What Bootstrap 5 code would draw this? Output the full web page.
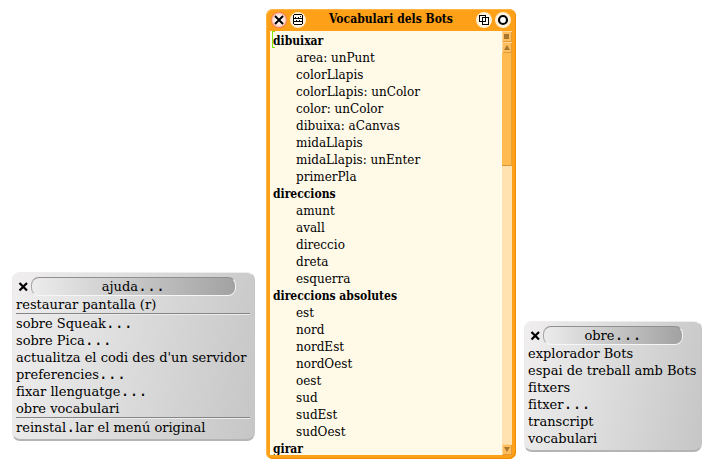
<!DOCTYPE html>
<html lang="ca">
<head>
<meta charset="utf-8">
<meta name="viewport" content="width=device-width, initial-scale=1">
<title>Vocabulari dels Bots</title>
<link rel="stylesheet" href="https://cdn.jsdelivr.net/npm/bootstrap@5.3.0/dist/css/bootstrap.min.css">
<style>
body { background: #fff; color: #000; font-family: "DejaVu Serif", serif; font-size: 13px; line-height: 17px; }
button { color: #000; font: inherit; }
.desktop { min-height: 100vh; }

/* floating menus */
.popmenu { padding: 4px 5px 3px 3px; border-radius: 8px; background: linear-gradient(100deg, #f0eeef 0%, #e0e0e0 38%, #c6c6c6 100%); border: 1px solid; border-color: #f0ecee #c6c6c6 #b4b4b4 #ebe9ea; border-bottom-width: 2px; }
.menu-ajuda { left: 12px; top: 272px; width: 243px; }
.menu-obre { left: 524px; top: 321px; width: 178px; }
.menu-head { height: 19px; padding-right: 13px; gap: 2px; }
.menu-close { width: 13px; height: 13px; }
.menu-title { height: 19px; border-radius: 8px; border: 1px solid; border-color: #8f8f8f #f2f2f2 #f6f6f6 #a8a8a8; background: linear-gradient(90deg, #ececec, #a2a2a2); }
.menu-item { height: 17px; }
.menu-item:hover { background: #d0d0d0; }
.menu-rule { height: 2px; border-top: 1px solid #868686; border-bottom: 1px solid #ececec; margin-right: -1px; }
.dots { font-family: "DejaVu Sans Mono", monospace; font-size: 15px; line-height: 1; }

/* vocabulary window */
.bots { left: 266px; top: 9px; width: 250px; height: 450px; padding: 0 4px 4px; border-radius: 7px; background: #ffa019; box-shadow: inset 1px 1px #ffb545, inset -1px -1px #f08c00; }
.bots-bar { height: 22px; gap: 3px; padding: 0 1px; }
.bots-bar h1 { font: bold 12px/17px "DejaVu Serif Condensed", "DejaVu Serif", serif; word-spacing: normal; }
.ball { width: 16px; height: 16px; border-radius: 8px; background: radial-gradient(circle, #fff 25%, #ffedd2 65%, #ffd695); }
.ball-red { background: radial-gradient(circle, #fff 20%, #ffd8c8 55%, #f0643c 72%); }
.pane { background: #fff9e8; min-height: 0; }
.vocab { font: 12px/17px "DejaVu Serif Condensed", "DejaVu Serif", serif; padding: 2px 3px 0; }
.vocab li li { padding-left: 23px; font-family: "DejaVu Serif", serif; }
.caret { left: 2px; top: 0; width: 3px; height: 17px; border: 1px solid #80e800; border-right: 0; }
.scroller { width: 10px; background: #ffe2b0; }
.scroller button { width: 10px; height: 11px; background: #ffbd5c; box-shadow: inset 1px 1px #ffd595, inset -1px -1px #e09a3a; }
.thumb { height: 113px; background: #ffbb50; border-right: 1px solid #e8a23c; border-bottom: 1px solid #d8983a; }
</style>
</head>
<body>
<main class="desktop position-relative overflow-hidden">

  <section class="popmenu menu-ajuda position-absolute" aria-label="ajuda">
    <header class="menu-head d-flex align-items-center">
      <button class="menu-close btn p-0 border-0 d-flex" aria-label="Tanca"><svg width="13" height="13" viewBox="0 0 13 13"><path d="M3.500 3l7.500 7.500M11 3l-7.500 7.500" stroke="#000" stroke-width="2.200" fill="none"/></svg></button>
      <div class="menu-title flex-grow-1 text-center">ajuda<span class="dots">...</span></div>
    </header>
    <button class="menu-item d-block w-100 text-start text-nowrap border-0 p-0 bg-transparent">restaurar pantalla (r)</button>
    <div class="menu-rule"></div>
    <button class="menu-item d-block w-100 text-start text-nowrap border-0 p-0 bg-transparent">sobre Squeak<span class="dots">...</span></button>
    <button class="menu-item d-block w-100 text-start text-nowrap border-0 p-0 bg-transparent">sobre Pica<span class="dots">...</span></button>
    <button class="menu-item d-block w-100 text-start text-nowrap border-0 p-0 bg-transparent">actualitza el codi des d'un servidor</button>
    <button class="menu-item d-block w-100 text-start text-nowrap border-0 p-0 bg-transparent">preferencies<span class="dots">...</span></button>
    <button class="menu-item d-block w-100 text-start text-nowrap border-0 p-0 bg-transparent">fixar llenguatge<span class="dots">...</span></button>
    <button class="menu-item d-block w-100 text-start text-nowrap border-0 p-0 bg-transparent">obre vocabulari</button>
    <div class="menu-rule"></div>
    <button class="menu-item d-block w-100 text-start text-nowrap border-0 p-0 bg-transparent">reinstal<span class="dots">.</span>lar el menú original</button>
  </section>

  <section class="bots position-absolute d-flex flex-column" aria-labelledby="bots-title">
    <header class="bots-bar d-flex align-items-center">
      <button class="ball ball-red btn p-0 border-0 d-flex" aria-label="Tanca"><svg width="16" height="16" viewBox="0 0 16 16"><path d="M4 4l8 8M12 4l-8 8" stroke="#000" stroke-width="2" fill="none"/></svg></button>
      <button class="ball btn p-0 border-0 d-flex" aria-label="Menú"><svg width="16" height="16" viewBox="0 0 16 16" shape-rendering="crispEdges"><path d="M4 2h8v1h1v9h-1v1h-8v-1h-1v-9h1zM4 3v3h8v-3zM4 7v2h8v-2zM4 10v2h8v-2z" fill-rule="evenodd"/><path d="M5 5h1v1h-1zM8 5h1v1h-1zM10 4h1v1h-1zM6 8h1v1h-1zM9 8h1v1h-1z"/></svg></button>
      <h1 id="bots-title" class="text-center flex-grow-1 mb-0">Vocabulari dels Bots</h1>
      <button class="ball btn p-0 border-0 d-flex" aria-label="Redueix"><svg width="16" height="16" viewBox="0 0 16 16" shape-rendering="crispEdges"><path d="M3.500 3.500h6v6h-6zM6.500 5.500h6v7h-6z" stroke="#000" fill="none"/></svg></button>
      <button class="ball btn p-0 border-0 d-flex" aria-label="Plega"><svg width="16" height="16" viewBox="0 0 16 16"><circle cx="8" cy="8" r="4" stroke="#000" stroke-width="2.200" fill="none"/></svg></button>
    </header>
    <div class="pane d-flex flex-grow-1">
      <div class="flex-grow-1 overflow-hidden position-relative">
        <span class="caret position-absolute"></span>
        <ul class="vocab list-unstyled mb-0">
          <li><strong>dibuixar</strong>
            <ul class="list-unstyled"><li>area: unPunt</li><li>colorLlapis</li><li>colorLlapis: unColor</li><li>color: unColor</li><li>dibuixa: aCanvas</li><li>midaLlapis</li><li>midaLlapis: unEnter</li><li>primerPla</li></ul></li>
          <li><strong>direccions</strong>
            <ul class="list-unstyled"><li>amunt</li><li>avall</li><li>direccio</li><li>dreta</li><li>esquerra</li></ul></li>
          <li><strong>direccions absolutes</strong>
            <ul class="list-unstyled"><li>est</li><li>nord</li><li>nordEst</li><li>nordOest</li><li>oest</li><li>sud</li><li>sudEst</li><li>sudOest</li></ul></li>
          <li><strong>girar</strong></li>
        </ul>
      </div>
      <div class="scroller d-flex flex-column">
        <button class="btn p-0 border-0 rounded-0 d-flex" aria-label="Menú de desplaçament"><svg width="10" height="11" viewBox="0 0 10 11"><path d="M2 3h5v5h-5z" fill="#a87830"/></svg></button>
        <button class="btn p-0 border-0 rounded-0 d-flex" aria-label="Amunt"><svg width="10" height="11" viewBox="0 0 10 11"><path d="M5 3l3 5h-6z" fill="#a87830"/></svg></button>
        <div class="thumb"></div>
        <button class="btn p-0 border-0 rounded-0 d-flex mt-auto" aria-label="Avall"><svg width="10" height="11" viewBox="0 0 10 11"><path d="M2 3h6l-3 5z" fill="#a87830"/></svg></button>
      </div>
    </div>
  </section>

  <section class="popmenu menu-obre position-absolute" aria-label="obre">
    <header class="menu-head d-flex align-items-center">
      <button class="menu-close btn p-0 border-0 d-flex" aria-label="Tanca"><svg width="13" height="13" viewBox="0 0 13 13"><path d="M3.500 3l7.500 7.500M11 3l-7.500 7.500" stroke="#000" stroke-width="2.200" fill="none"/></svg></button>
      <div class="menu-title flex-grow-1 text-center">obre<span class="dots">...</span></div>
    </header>
    <button class="menu-item d-block w-100 text-start text-nowrap border-0 p-0 bg-transparent">explorador Bots</button>
    <button class="menu-item d-block w-100 text-start text-nowrap border-0 p-0 bg-transparent">espai de treball amb Bots</button>
    <button class="menu-item d-block w-100 text-start text-nowrap border-0 p-0 bg-transparent">fitxers</button>
    <button class="menu-item d-block w-100 text-start text-nowrap border-0 p-0 bg-transparent">fitxer<span class="dots">...</span></button>
    <button class="menu-item d-block w-100 text-start text-nowrap border-0 p-0 bg-transparent">transcript</button>
    <button class="menu-item d-block w-100 text-start text-nowrap border-0 p-0 bg-transparent">vocabulari</button>
  </section>
</main>
<script src="https://cdn.jsdelivr.net/npm/bootstrap@5.3.0/dist/js/bootstrap.bundle.min.js"></script>
</body>
</html>
